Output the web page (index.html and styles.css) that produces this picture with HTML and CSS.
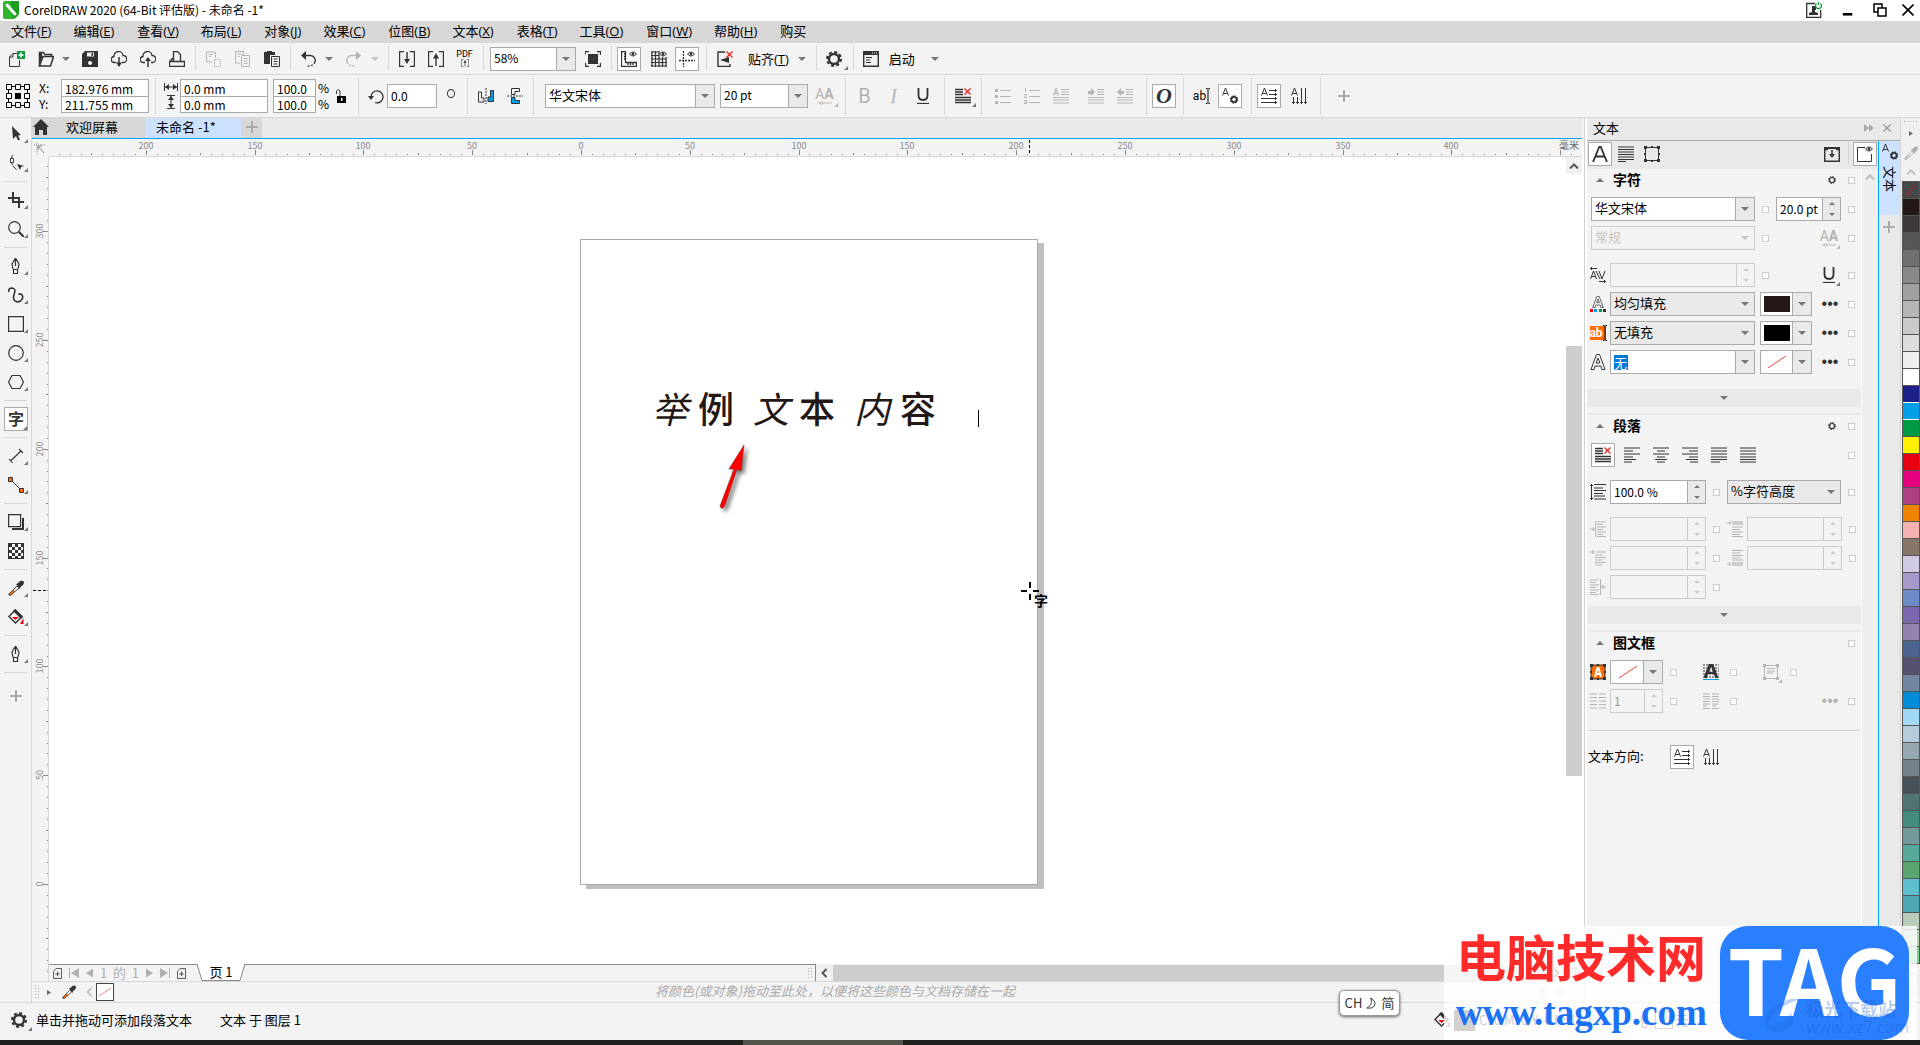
FILE: index.html
```html
<!DOCTYPE html>
<html lang="zh-CN">
<head>
<meta charset="utf-8">
<title>CorelDRAW 2020 (64-Bit 评估版) - 未命名 -1*</title>
<link rel="stylesheet" href="styles.css">
</head>
<body>
<svg class="sprite" aria-hidden="true">
  <symbol id="logo" viewBox="0 0 16 18"><path d="M0 2 Q0 0 2 0H16V12Q15 16 10 18H2Q0 18 0 16Z" fill="#2fb52c"/><path d="M8 0H16V12Q15 16 10 18Z" fill="#189d20"/><path d="M4 4L12 13" stroke="#fff" stroke-width="3" stroke-linecap="round"/></symbol>
  <symbol id="new" viewBox="0 0 16 16"><path d="M8 2.500H4L.5 6v9.500h10V9M4 2.500V6H.5" fill="none" stroke="#333"/><path d="M8 0h8v8H8z" fill="#109a3c"/><path d="M12 1.500v5M9.500 4h5" stroke="#fff" stroke-width="1.500"/></symbol>
  <symbol id="open" viewBox="0 0 16 16"><path d="M1.500 15V1.500h4l1 2h7V6" fill="none" stroke="#333" stroke-width="1.500"/><path d="M1.500 15L5 5.500h10.500L12.500 15z" fill="#f3f3f3" stroke="#333" stroke-width="1.500"/><path d="M1 14L1 2h3v5z" fill="#333"/></symbol>
  <symbol id="save" viewBox="0 0 16 16"><path d="M3 0h13v16H0V3z" fill="#333"/><path d="M5 1.500h7v4H5zM8 10a2 2 0 1 0 .1 0z" fill="#f3f3f3"/><path d="M9.500 2h1.500v3H9.500z" fill="#333"/></symbol>
  <symbol id="cloud" viewBox="0 0 16 16"><path d="M5 11.500H3.500A3 3 0 0 1 3 5.500A4.500 4.500 0 0 1 12 4.500A3.500 3.500 0 0 1 12.500 11.500H11" fill="none" stroke="#333" stroke-width="1.300"/></symbol>
  <symbol id="clouddown" viewBox="0 0 16 16"><use href="#cloud"/><path d="M8 6v8" stroke="#333" stroke-width="1.500"/><path d="M5 11.500h6L8 16z" fill="#333"/></symbol>
  <symbol id="cloudup" viewBox="0 0 16 16"><use href="#cloud"/><path d="M8 9v7" stroke="#333" stroke-width="1.500"/><path d="M5 10h6L8 6z" fill="#333"/></symbol>
  <symbol id="print" viewBox="0 0 16 16"><path d="M4.500 10.500v-10h4l3 3v7M.5 10.500h15v5H.5zM.5 10.500L4 7" fill="none" stroke="#333" stroke-width="1.300"/></symbol>
  <symbol id="cut" viewBox="0 0 16 16"><path d="M9.500 7V1H.5v10H6M3 3.500h4M3 5.500h2" fill="none" stroke="#b4b4b4"/><path d="M8.500 8.500h6v7h-6z" fill="none" stroke="#b4b4b4" stroke-dasharray="2 1"/></symbol>
  <symbol id="copy" viewBox="0 0 16 16"><path d="M5 12H.5V.5h8V4M2.500 3h4M2.500 5.500h2M6.500 4.500h8v11h-8zM8.500 7.500h4M8.500 10h4M8.500 12.500h4" fill="none" stroke="#b4b4b4"/></symbol>
  <symbol id="paste" viewBox="0 0 16 16"><path d="M0 1h3V0h5v1h3v3H6v9H0z" fill="#333"/><path d="M7.500 5.500h8v10h-8zM9.500 8h4M9.500 10.500h4M9.500 13h4" fill="#f3f3f3" stroke="#333"/></symbol>
  <symbol id="undo" viewBox="0 0 16 16"><path d="M3 4.500H9.500A5 5 0 0 1 14 11" fill="none" stroke="currentColor" stroke-width="1.300"/><path d="M14 11Q12 15.500 6 15" fill="none" stroke="currentColor" stroke-width="1.300" stroke-dasharray="2 1.500"/><path d="M5 0v9L0 4.500z" fill="currentColor"/></symbol>
  <symbol id="redo" viewBox="0 0 16 16"><path d="M13 4.500H6.500A5 5 0 0 0 2 11" fill="none" stroke="currentColor" stroke-width="1.300"/><path d="M2 11Q4 15.500 10 15" fill="none" stroke="currentColor" stroke-width="1.300" stroke-dasharray="2 1.500"/><path d="M11 0v9l5-4.500z" fill="currentColor"/></symbol>
  <symbol id="import" viewBox="0 0 16 16"><path d="M5 .5H.5v15H5M11 .5h4.500v15H11M8 1v10" fill="none" stroke="#333" stroke-width="1.400"/><path d="M5 8h6L8 13z" fill="#333"/></symbol>
  <symbol id="export" viewBox="0 0 16 16"><path d="M5 .5H.5v15H5M11 .5h4.500v15H11M8 15V5" fill="none" stroke="#333" stroke-width="1.400"/><path d="M5 7.500h6L8 2z" fill="#333"/></symbol>
  <symbol id="fit" viewBox="0 0 16 16"><path d="M3 3h10v10H3z" fill="#333"/><path d="M0 4V.5h4M12 .5h3.500V4M15.500 12v3.500H12M4 15.500H.5V12" fill="none" stroke="#333" stroke-width="1.400"/></symbol>
  <symbol id="eye" viewBox="0 0 8 6"><path d="M.5 3Q4-1 7.500 3Q4 7 .5 3z" fill="#fff" stroke="#333"/><circle cx="4" cy="3" r="1.400" fill="#333"/></symbol>
  <symbol id="rulers" viewBox="0 0 16 16"><path d="M.5.500h4v11h11v4H.5zM3 3h2M3 5.500h2M3 8h2M7 12v2M9.500 12v2M12 12v2" fill="none" stroke="#333" stroke-width="1.300"/><use href="#eye" x="8" y="0" width="8" height="6"/></symbol>
  <symbol id="grid" viewBox="0 0 16 16"><path d="M1 0v16M4.500 0v16M8 0v16M11.500 6v10M15 6v10M0 1h8M0 4.500h8M0 8h16M0 11.500h16M0 15h16" stroke="#333" stroke-width="1.200"/><use href="#eye" x="8" y="0" width="8" height="6"/></symbol>
  <symbol id="guides" viewBox="0 0 16 16"><path d="M4.500 0v16M0 9.500h16" stroke="#333" stroke-width="1.300" stroke-dasharray="2 1"/><use href="#eye" x="8" y="0" width="8" height="6"/></symbol>
  <symbol id="redx" viewBox="0 0 7 7"><path d="M.5.500l6 6M6.500.500l-6 6" stroke="#e8201c" stroke-width="1.300"/></symbol>
  <symbol id="snap" viewBox="0 0 16 16"><path d="M8 1H1v14.500h12V13" fill="none" stroke="#333" stroke-width="1.400"/><path d="M3 9l9-3v6z" fill="#333"/><use href="#redx" x="9" y="0" width="7" height="7"/></symbol>
  <symbol id="gear" viewBox="0 0 16 16"><circle cx="8" cy="8" r="5" fill="none" stroke="#333" stroke-width="2.400"/><circle cx="8" cy="8" r="7" fill="none" stroke="#333" stroke-width="2" stroke-dasharray="3 2.500"/></symbol>
  <symbol id="launch" viewBox="0 0 16 16"><path d="M.7.700h14.600v14.600H.7z" fill="none" stroke="#333" stroke-width="1.400"/><path d="M0 0h16v4H0z" fill="#333"/><path d="M3 6.500h6M3 9h4M3 11.500h5" stroke="#333"/><path d="M9 2h1M11 2h1M13 2h1" stroke="#fff"/></symbol>
  <symbol id="anchor" viewBox="0 0 24 24"><path d="M2.500 2.500h19v19h-19z" fill="none" stroke="#000"/><path d="M.5.500h5v5h-5zM9.500.500h5v5h-5zM18.500.500h5v5h-5zM.5 9.500h5v5h-5zM18.500 9.500h5v5h-5zM.5 18.500h5v5h-5zM9.500 18.500h5v5h-5zM18.500 18.500h5v5h-5z" fill="#fff" stroke="#000"/><path d="M9 9h6v6H9z"/></symbol>
  <symbol id="wide" viewBox="0 0 14 8"><path d="M.5 0v8M13.500 0v8M1 4h12" stroke="#333"/><path d="M1 4l4-3v6zM13 4L9 1v6z" fill="#333"/></symbol>
  <symbol id="tall" viewBox="0 0 8 14"><path d="M0 .5h8M0 13.500h8M4 1v12" stroke="#333"/><path d="M4 1l3 4H1zM4 13l3-4H1z" fill="#333"/></symbol>
  <symbol id="lock" viewBox="0 0 12 14"><path d="M1.500 5V2Q3-1 5 2v6" fill="none" stroke="#333"/><path d="M2 7h9v7H2z"/><path d="M6 9h1.500v3H6z" fill="#fff"/></symbol>
  <symbol id="rotate" viewBox="0 0 16 16"><path d="M3 9A6 6 0 1 1 7 14.500" fill="none" stroke="#333" stroke-width="1.300"/><path d="M0 8h6L3 12z" fill="#333"/></symbol>
  <symbol id="mirrorh" viewBox="0 0 16 16"><path d="M.5 4h3v6H6v4H.5z" fill="none" stroke="#333"/><path d="M15.500 2.500h-3V9H10v4.500h5.500z" fill="#00a0e9" stroke="#333"/><path d="M8 0v16" stroke="#333" stroke-dasharray="2 1"/></symbol>
  <symbol id="mirrorv" viewBox="0 0 16 16"><path d="M4.500 6.500V.5h8v3H8v3z" fill="none" stroke="#333"/><path d="M4.500 9.500v6h8v-3H8v-3z" fill="#00a0e9" stroke="#333"/><path d="M0 8h16" stroke="#333" stroke-dasharray="2 1"/></symbol>
  <symbol id="under" viewBox="0 0 16 16"><path d="M3.500 0v7Q3.500 12 8 12T12.500 7V0" fill="none" stroke="#333" stroke-width="1.800"/><path d="M2 15.500h12" stroke="#333" stroke-width="1.200"/></symbol>
  <symbol id="noalign" viewBox="0 0 16 16"><path d="M0 1.500h8M0 4h8M0 6.500h8M0 9.500h16M0 12h16M0 14.500h16" stroke="#333" stroke-width="1.300"/><use href="#redx" x="9" y="0" width="7" height="7"/></symbol>
  <symbol id="bullets" viewBox="0 0 16 16"><path d="M0 1h3v3H0zM0 7h3v3H0zM0 13h3v3H0z" fill="#b4b4b4"/><path d="M5 2.500h11M5 8.500h11M5 14.500h11" stroke="#b4b4b4"/></symbol>
  <symbol id="numbers" viewBox="0 0 16 16"><path d="M1.500 0v4M0 6.500h2.500L.5 9.500H3M0 12.500h2.500v3H0M.5 14h2M5 2.500h11M5 8.500h11M5 14.500h11" stroke="#b4b4b4" fill="none"/></symbol>
  <symbol id="dropcap" viewBox="0 0 16 16"><path d="M.5 7.500L3 1l2.500 6.500M1.500 5.500h3M8 1.500h8M8 4h8M8 6.500h8M0 9.500h16M0 12h16M0 15h16" fill="none" stroke="#b4b4b4" stroke-width="1.200"/></symbol>
  <symbol id="indent" viewBox="0 0 16 16"><path d="M0 3h3V0l4 4-4 4V6H0z" fill="#b4b4b4"/><path d="M9 1.500h7M9 4h7M9 6.500h7M0 9.500h16M0 12h16M0 15h16" stroke="#b4b4b4" stroke-width="1.200"/></symbol>
  <symbol id="outdent" viewBox="0 0 16 16"><path d="M7 3H4V0L0 4l4 4V6h3z" fill="#b4b4b4"/><path d="M9 1.500h7M9 4h7M9 6.500h7M0 9.500h16M0 12h16M0 15h16" stroke="#b4b4b4" stroke-width="1.200"/></symbol>
  <symbol id="textgear" viewBox="0 0 16 16"><path d="M.5 7.500L3.500 0l3 7.500M1.500 5.500h4" fill="none" stroke="#333"/><circle cx="12" cy="11.500" r="2.600" fill="none" stroke="#333" stroke-width="1.800"/><circle cx="12" cy="11.500" r="3.600" fill="none" stroke="#333" stroke-width="1.200" stroke-dasharray="1.500 1.300"/></symbol>
  <symbol id="ibeam" viewBox="0 0 4 16"><path d="M0 .5h1.500M2.500.500H4M2 1v14M0 15.500h1.500M2.500 15.500H4" stroke="#000"/></symbol>
  <symbol id="horiz" viewBox="0 0 16 16"><path d="M.5 7.500L3.500 0l3 7.500M1.500 5.500h4M8 2.500h8M8 6.500h8M0 10.500h16M0 14.500h16M14.500 1v3M14.500 5v3M14.500 9v3M14.500 13v3" fill="none" stroke="#333"/></symbol>
  <symbol id="vert" viewBox="0 0 16 16"><path d="M.5 7.500L3.500 0l3 7.500M1.500 5.500h4M10.500 0v16M14.500 0v16M2.500 9v7M6.500 9v7M1 14.500h3M5 14.500h3M9 14.500h3M13 14.500h3" fill="none" stroke="#333"/></symbol>
  <symbol id="opentype" viewBox="0 0 16 4"><path d="M0 2h16" stroke="#b4b4b4"/><circle cx="4" cy="2" r="1.500" fill="#f3f3f3" stroke="#b4b4b4"/></symbol>
  <symbol id="plus" viewBox="0 0 12 12"><path d="M6 0v12M0 6h12" stroke="#aaa" stroke-width="2"/></symbol>
  <symbol id="account" viewBox="0 0 16 16"><path d="M9 1.500H.7v13.800h14V8" fill="none" stroke="#333" stroke-width="1.300"/><path d="M6 4h4v4H9v2l3 1v2H3v-2l3-1V8z" fill="#333"/><path d="M10.500 1.500a3 3 0 1 0 4 0M12.500 0v3" fill="none" stroke="#109a3c" stroke-width="1.300"/></symbol>
  <symbol id="min" viewBox="0 0 12 14"><path d="M0 12h11" stroke="#000" stroke-width="3"/></symbol>
  <symbol id="restore" viewBox="0 0 14 14"><path d="M1 1h8v8H1z" fill="none" stroke="#000" stroke-width="1.500"/><path d="M5 5h8v8H5z" fill="#fff" stroke="#000" stroke-width="1.500"/></symbol>
  <symbol id="close" viewBox="0 0 12 12"><path d="M.5.500l11 11M11.500.500l-11 11" stroke="#000" stroke-width="1.600"/></symbol>
  <symbol id="pick" viewBox="0 0 16 16"><path d="M4 0l9 9-3 .5 2 4-2 1-2-4.500L5 13z" fill="#333"/></symbol>
  <symbol id="shape" viewBox="0 0 16 16"><path d="M5 0Q2 3 3.500 7.500T9 15" fill="none" stroke="#333" stroke-dasharray="5 1"/><path d="M2.500 3.500h3v4h-3z" fill="#fff" stroke="#333"/><path d="M9 9l7 2-3 1-1 3z" fill="#333"/></symbol>
  <symbol id="crop" viewBox="0 0 16 16"><path d="M5 0v10h11M0 6h11v10" fill="none" stroke="#333" stroke-width="2"/></symbol>
  <symbol id="zoom" viewBox="0 0 16 16"><circle cx="6.500" cy="6.500" r="5.800" fill="none" stroke="#333" stroke-width="1.200"/><path d="M11 11l5 5" stroke="#333" stroke-width="2.200"/></symbol>
  <symbol id="pen" viewBox="0 0 16 16"><path d="M5.500 11.500h4v4h-4zM5 11L4 6l3.500-6L11 6l-1 5M7.500 1v7" fill="none" stroke="#333" stroke-width="1.200"/></symbol>
  <symbol id="curve" viewBox="0 0 16 16"><path d="M1 5Q0 1 4 1Q8 1.500 6.500 6Q4.500 11 6.500 13.500Q9 16 12.500 14Q16 11 14 8Q12.500 6 10.500 7.500" fill="none" stroke="#333" stroke-width="1.600"/></symbol>
  <symbol id="rect" viewBox="0 0 16 16"><path d="M.6.600h14.800v14.800H.6z" fill="none" stroke="#333" stroke-width="1.200"/></symbol>
  <symbol id="ellipse" viewBox="0 0 16 16"><circle cx="8" cy="8" r="7.300" fill="none" stroke="#333" stroke-width="1.200"/></symbol>
  <symbol id="poly" viewBox="0 0 16 16"><path d="M4 1.500h8l3.500 6.500-3.500 6.500H4L.5 8z" fill="none" stroke="#333" stroke-width="1.200"/></symbol>
  <symbol id="dim" viewBox="0 0 16 16"><path d="M2.500 13L13 3M1 11l3.500 4M11 1l4 4" fill="none" stroke="#333" stroke-width="1.100"/></symbol>
  <symbol id="conn" viewBox="0 0 16 16"><path d="M3 3l10 10" stroke="#333"/><path d="M.5.500h4v4h-4zM11.500 11.500h4v4h-4z" fill="#ff6d00" stroke="#333"/></symbol>
  <symbol id="shadow" viewBox="0 0 16 16"><path d="M.6.600h12v12H.6z" fill="none" stroke="#333" stroke-width="1.200"/><path d="M4 15h11V4" fill="none" stroke="#333" stroke-width="2"/></symbol>
  <symbol id="checker" viewBox="0 0 16 16"><path d="M0 0h16v16H0z" fill="#333"/><path d="M4 1h3v3H4zM10 1h3v3h-3zM1 4h3v3H1zM7 4h3v3H7zM13 4h2v3h-2zM4 7h3v3H4zM10 7h3v3h-3zM1 10h3v3H1zM7 10h3v3H7zM13 10h2v3h-2zM4 13h3v2H4zM10 13h3v2h-3z" fill="#fff"/></symbol>
  <symbol id="dropper" viewBox="0 0 16 16"><path d="M1 14L9 6l2 2-8 7H1z" fill="#fff" stroke="#333"/><path d="M1 14l4-4 1.500 1.500L3 15H1z" fill="#ff6d00" stroke="#333" stroke-width=".6"/><path d="M8 4l1.500-.5L12 1q3-1 4 1 0 2-1 3l-2.500 2L12 9z" fill="#333"/></symbol>
  <symbol id="bucket" viewBox="0 0 16 16"><path d="M7.500 1L14 7.500 7.500 14 1 7.500z" fill="#fff" stroke="#333" stroke-width="1.500"/><path d="M7 0l8 8-2 2-8-8z" fill="#333"/><path d="M4 8h7l-3.500 3zM15.500 9v6H12z" fill="#e60012"/></symbol>
  <symbol id="home" viewBox="0 0 16 16"><path d="M8 0l8 8h-2v8h-4v-5H6v5H2V8H0z" fill="#333"/></symbol>
  <symbol id="up" viewBox="0 0 10 6"><path d="M1 5.500l4-4 4 4" fill="none" stroke="currentColor" stroke-width="2"/></symbol>
  <symbol id="left" viewBox="0 0 6 10"><path d="M5.500 1l-4 4 4 4" fill="none" stroke="currentColor" stroke-width="2"/></symbol>
  <symbol id="right" viewBox="0 0 6 10"><path d="M.5 1l4 4-4 4" fill="none" stroke="currentColor" stroke-width="2"/></symbol>
  <symbol id="more" viewBox="0 0 9 8"><path d="M.5.500L4 4 .5 7.500M4.500.500L8 4 4.500 7.500" fill="none" stroke="currentColor"/></symbol>
  <symbol id="dbl" viewBox="0 0 10 8"><path d="M0 0l5 4-5 4zM5 0l5 4-5 4z" fill="#aaa"/></symbol>
  <symbol id="addpage" viewBox="0 0 10 12"><path d="M3.500.500h6v11h-9v-8zM5 4v5M2.500 6.500h5" fill="none" stroke="#444"/></symbol>
  <symbol id="tri" viewBox="0 0 8 10"><path d="M0 0l8 5-8 5z" fill="currentColor"/></symbol>
  <symbol id="tril" viewBox="0 0 8 10"><path d="M8 0L0 5l8 5z" fill="currentColor"/></symbol>
  <symbol id="first" viewBox="0 0 10 10"><path d="M.5 0v10" stroke="#b0b0b0"/><path d="M10 0L2 5l8 5z" fill="#b0b0b0"/></symbol>
  <symbol id="last" viewBox="0 0 10 10"><path d="M9.500 0v10" stroke="#b0b0b0"/><path d="M0 0l8 5-8 5z" fill="#b0b0b0"/></symbol>
  <symbol id="bigA" viewBox="0 0 16 16"><path d="M1 16L7.200 1h1.600L15 16M3.500 10.500h9" fill="none" stroke="#333" stroke-width="1.800"/></symbol>
  <symbol id="para" viewBox="0 0 16 16"><path d="M0 1h16M0 3.500h16M0 6h16M0 8.500h16M0 11h16M0 13.500h16M0 15.500h8" stroke="#333"/></symbol>
  <symbol id="frame" viewBox="0 0 16 16"><path d="M1.500 1.500h13v13h-13z" fill="none" stroke="#333"/><path d="M0 0h3v3H0zM13 0h3v3h-3zM0 13h3v3H0zM13 13h3v3h-3zM7 0h2v2H7zM7 14h2v2H7zM0 7h2v2H0zM14 7h2v2h-2z" fill="#333"/></symbol>
  <symbol id="dock" viewBox="0 0 16 16"><path d="M4 3.500H.7v11.800h14.600V3.500H12M8 4v6" fill="none" stroke="#333" stroke-width="1.500"/><path d="M0 1h16v2H0zM5 8h6l-3 4z" fill="#333"/></symbol>
  <symbol id="boxeye" viewBox="0 0 16 16"><path d="M8 1.500H.5v14h14V8" fill="none" stroke="#333"/><use href="#eye" x="8" y="0" width="8" height="6"/></symbol>
  <symbol id="kern" viewBox="0 0 16 16"><path d="M.5 12L3.500 4l3 8M1.500 9.500h4M6 4l4 8M9 4l3 8 3-8M0 1.500h7M9 14.500h7M1.500 0v3M14.500 13v3" fill="none" stroke="#333"/></symbol>
  <symbol id="outA" viewBox="0 0 16 16"><path d="M1 15.500L6.500.500h3L15 15.500h-3L11 12H5l-1 3.500zM6 9h4L8 4z" fill="#fff" stroke="#333"/></symbol>
  <symbol id="fillA" viewBox="0 0 16 16"><use href="#outA" x="2" y="0" width="12" height="12"/><path d="M0 13h3v3H0z" fill="#f00"/><path d="M4 13h3v3H4z" fill="#00a0e9"/><path d="M9 13h3v3H9z" fill="#094"/><path d="M13 13h3v3h-3z" fill="#333"/></symbol>
  <symbol id="frameA" viewBox="0 0 16 16"><path d="M1 1h14v14H1z" fill="#ff6d00" stroke="#333"/><path d="M0 0h3v3H0zM13 0h3v3h-3zM0 13h3v3H0zM13 13h3v3h-3zM7 0h2v2H7zM7 14h2v2H7zM0 7h2v2H0zM14 7h2v2h-2z" fill="#333"/><path d="M5 13L7.500 4h1L11 13M6 10h4" fill="none" stroke="#fff" stroke-width="2"/></symbol>
  <symbol id="slash" viewBox="0 0 18 12"><path d="M0 12L18 0" stroke="#f04040"/></symbol>
  <symbol id="al" viewBox="0 0 16 16"><path d="M0 1h16M0 4h9M0 7h16M0 10h9M0 12.500h12M0 15h8" stroke="#333" stroke-width="1.200"/></symbol>
  <symbol id="ac" viewBox="0 0 16 16"><path d="M0 1h16M4 4h8M0 7h16M4 10h8M2 12.500h12M4 15h8" stroke="#333" stroke-width="1.200"/></symbol>
  <symbol id="ar" viewBox="0 0 16 16"><path d="M0 1h16M7 4h9M0 7h16M7 10h9M4 12.500h12M8 15h8" stroke="#333" stroke-width="1.200"/></symbol>
  <symbol id="aj" viewBox="0 0 16 16"><path d="M0 1h16M0 4h16M0 7h16M0 10h16M0 12.500h16M0 15h9" stroke="#333" stroke-width="1.200"/></symbol>
  <symbol id="af" viewBox="0 0 16 16"><path d="M0 1h16M0 4h16M0 7h16M0 10h16M0 12.500h16M0 15h16" stroke="#333" stroke-width="1.200"/></symbol>
  <symbol id="leading" viewBox="0 0 16 16"><path d="M1.500 0v16M0 1.500h3M0 14.500h3M4 .5h12M4 4h9M4 6.500h12M4 9.500h9M4 12h11M4 15h12" stroke="#333"/></symbol>
  <symbol id="indl" viewBox="0 0 16 16"><path d="M0 8h5M3 6v4M5.500 0v16M7 1h9M7 3.500h6M7 6h9M7 8.500h6M7 11h9M7 13.500h6M7 15.500h9" stroke="#b4b4b4"/></symbol>
  <symbol id="indf" viewBox="0 0 16 16"><path d="M0 2h5M3 0v4M6 2h10M5 5h8M5 7.500h11M5 10h8M5 12.500h11M5 15h7" stroke="#b4b4b4"/></symbol>
  <symbol id="indr" viewBox="0 0 16 16"><path d="M11 8h5M13 6v4M10.500 0v16M0 1h9M0 3.500h6M0 6h9M0 8.500h6M0 11h9M0 13.500h6M0 15.500h9" stroke="#b4b4b4"/></symbol>
  <symbol id="bef" viewBox="0 0 16 16"><path d="M0 2h4M3 0v4" stroke="#b4b4b4"/><path d="M5 0h11v4H5z" fill="#ccc"/><path d="M5 6h11M5 8.500h8M5 11h11M5 13.500h8M5 15.500h11" stroke="#b4b4b4"/></symbol>
  <symbol id="aft" viewBox="0 0 16 16"><path d="M0 14h4M3 12v4" stroke="#b4b4b4"/><path d="M5 12h11v4H5z" fill="#ccc"/><path d="M5 .5h11M5 3h8M5 5.500h11M5 8h8M5 10h11" stroke="#b4b4b4"/></symbol>
  <symbol id="baseA" viewBox="0 0 16 16"><path d="M0 1h16M0 4h16M0 7h16M0 10h16M0 13h16" stroke="#333" stroke-dasharray="2 1"/><path d="M2 14L7 1h2l5 13" fill="none" stroke="#333" stroke-width="3"/><path d="M4 9h8" stroke="#333" stroke-width="2"/><path d="M0 15.500h16" stroke="#00a0e9"/></symbol>
  <symbol id="framealign" viewBox="0 0 16 16"><path d="M1.500 1.500h13v13h-13zM4 4.500h8M4 7h8M4 9h6" fill="none" stroke="#b4b4b4"/><path d="M0 0h3v3H0zM13 0h3v3h-3zM0 13h3v3H0zM13 13h3v3h-3z" fill="#b4b4b4"/></symbol>
  <symbol id="cols" viewBox="0 0 16 16"><path d="M0 1h7M9 1h7M0 4.500h7M9 4.500h7M0 8h7M9 8h7M0 11.500h7M9 11.500h7M0 15h7M9 15h7" stroke="#b4b4b4"/></symbol>
  <symbol id="cols2" viewBox="0 0 16 16"><path d="M0 1h7M9 1h7M0 3.500h7M9 3.500h7M0 6h7M9 6h7M0 8.500h7M9 8.500h7M0 11h7M9 11h7M0 13h4M9 13h4M0 15.500h7M9 15.500h7" stroke="#b4b4b4"/></symbol>
  <symbol id="origin" viewBox="0 0 12 12"><path d="M0 2h12M3 0v12" stroke="#888" stroke-dasharray="1 1"/><path d="M4 3l6 7M4 3v4M4 3h4" stroke="#888" fill="none"/></symbol>
  <symbol id="navi" viewBox="0 0 12 12"><circle cx="6" cy="6" r="5" fill="none" stroke="#555"/><path d="M4 4h1M7 4h1M4 7h1M7 7h1M6 9v3" stroke="#555"/></symbol>
</svg>

<div class="app">
  <header class="titlebar">
    <svg class="logo"><use href="#logo"/></svg>
    <h1>CorelDRAW 2020 (64-Bit 评估版) - 未命名 -1*</h1>
    <button aria-label="帐户"><svg class="i"><use href="#account"/></svg></button>
    <button aria-label="最小化"><svg class="s12"><use href="#min"/></svg></button>
    <button aria-label="还原"><svg class="s14"><use href="#restore"/></svg></button>
    <button aria-label="关闭"><svg class="s12"><use href="#close"/></svg></button>
  </header>

  <nav class="menubar">
    <button>文件(<u>F</u>)</button><button>编辑(<u>E</u>)</button><button>查看(<u>V</u>)</button><button>布局(<u>L</u>)</button><button>对象(<u>J</u>)</button><button>效果(<u>C</u>)</button><button>位图(<u>B</u>)</button><button>文本(<u>X</u>)</button><button>表格(<u>T</u>)</button><button>工具(<u>O</u>)</button><button>窗口(<u>W</u>)</button><button>帮助(<u>H</u>)</button><button>购买</button>
  </nav>

  <div class="toolbar">
    <button class="t" aria-label="新建"><svg class="i"><use href="#new"/></svg></button>
    <button class="t" aria-label="打开"><svg class="i"><use href="#open"/></svg></button>
    <button class="drop" aria-label="最近打开"></button>
    <button class="t" aria-label="保存"><svg class="i"><use href="#save"/></svg></button>
    <button class="t" aria-label="云下载"><svg class="i"><use href="#clouddown"/></svg></button>
    <button class="t" aria-label="云上传"><svg class="i"><use href="#cloudup"/></svg></button>
    <button class="t" aria-label="打印"><svg class="i"><use href="#print"/></svg></button>
    <i class="sep"></i>
    <button class="t" aria-label="剪切" disabled><svg class="i"><use href="#cut"/></svg></button>
    <button class="t" aria-label="复制" disabled><svg class="i"><use href="#copy"/></svg></button>
    <button class="t" aria-label="粘贴"><svg class="i"><use href="#paste"/></svg></button>
    <i class="sep"></i>
    <button class="t ink" aria-label="撤消"><svg class="i"><use href="#undo"/></svg></button>
    <button class="drop" aria-label="撤消列表"></button>
    <button class="t off" aria-label="重做" disabled><svg class="i"><use href="#redo"/></svg></button>
    <button class="drop off" aria-label="重做列表" disabled></button>
    <i class="sep"></i>
    <button class="t" aria-label="导入"><svg class="i"><use href="#import"/></svg></button>
    <button class="t" aria-label="导出"><svg class="i"><use href="#export"/></svg></button>
    <button class="t pdf" aria-label="发布为 PDF">PDF<svg class="s8"><use href="#export"/></svg></button>
    <i class="sep"></i>
    <span class="combo zoom"><select aria-label="缩放级别"><option>58%</option></select></span>
    <button class="t" aria-label="全屏预览"><svg class="i"><use href="#fit"/></svg></button>
    <i class="sep"></i>
    <button class="t on" aria-label="显示标尺"><svg class="i"><use href="#rulers"/></svg></button>
    <button class="t" aria-label="显示网格"><svg class="i"><use href="#grid"/></svg></button>
    <button class="t on" aria-label="显示辅助线"><svg class="i"><use href="#guides"/></svg></button>
    <i class="sep"></i>
    <button class="t" aria-label="关闭贴齐"><svg class="i"><use href="#snap"/></svg></button>
    <button class="label">贴齐(<u>T</u>)</button>
    <button class="drop" aria-label="贴齐选项"></button>
    <i class="sep"></i>
    <button class="t fly" aria-label="选项"><svg class="i"><use href="#gear"/></svg></button>
    <i class="sep"></i>
    <button class="t" aria-label="应用程序启动器"><svg class="i"><use href="#launch"/></svg></button>
    <button class="label start">启动</button>
    <button class="drop" aria-label="启动列表"></button>
  </div>

  <div class="toolbar props">
    <button class="anchor" aria-label="对象原点"><svg class="s24"><use href="#anchor"/></svg></button>
    <div class="pair names"><label for="px">X:</label><label for="py">Y:</label></div>
    <div class="pair boxes w88"><input id="px" value="182.976 mm"><input id="py" value="211.755 mm"></div>
    <i class="sep"></i>
    <div class="pair marks"><svg class="wide"><use href="#wide"/></svg><svg class="tall"><use href="#tall"/></svg></div>
    <div class="pair boxes w88"><input aria-label="宽度" value="0.0 mm"><input aria-label="高度" value="0.0 mm"></div>
    <div class="pair boxes w43"><input aria-label="水平缩放" value="100.0"><input aria-label="垂直缩放" value="100.0"></div>
    <div class="pair names pct"><span>%</span><span>%</span></div>
    <button class="t ratio" aria-label="锁定比率"><svg class="lock"><use href="#lock"/></svg></button>
    <i class="sep"></i>
    <svg class="i rot"><use href="#rotate"/></svg>
    <input class="box w50" aria-label="旋转角度" value="0.0">
    <span class="deg"></span>
    <i class="sep"></i>
    <button class="t" aria-label="水平镜像"><svg class="i"><use href="#mirrorh"/></svg></button>
    <button class="t" aria-label="垂直镜像"><svg class="i"><use href="#mirrorv"/></svg></button>
    <i class="sep"></i>
    <span class="combo font"><select aria-label="字体"><option>华文宋体</option></select></span>
    <span class="combo size"><select aria-label="字号"><option>20 pt</option></select></span>
    <button class="t aa fly" aria-label="可变字体" disabled><span>A<b>A</b></span><svg class="bar"><use href="#opentype"/></svg></button>
    <i class="sep"></i>
    <button class="t off bold" aria-label="粗体" disabled>B</button>
    <button class="t off ital" aria-label="斜体" disabled>I</button>
    <button class="t" aria-label="下划线"><svg class="i"><use href="#under"/></svg></button>
    <i class="sep"></i>
    <button class="t fly" aria-label="文本对齐"><svg class="i"><use href="#noalign"/></svg></button>
    <i class="sep"></i>
    <button class="t" aria-label="项目符号" disabled><svg class="i"><use href="#bullets"/></svg></button>
    <button class="t" aria-label="编号" disabled><svg class="i"><use href="#numbers"/></svg></button>
    <button class="t" aria-label="首字下沉" disabled><svg class="i"><use href="#dropcap"/></svg></button>
    <button class="t gap" aria-label="增加缩进" disabled><svg class="i"><use href="#indent"/></svg></button>
    <button class="t" aria-label="减少缩进" disabled><svg class="i"><use href="#outdent"/></svg></button>
    <i class="sep"></i>
    <button class="t on oval" aria-label="交互式 OpenType">O</button>
    <i class="sep"></i>
    <button class="t edit" aria-label="编辑文本">ab<svg class="beam"><use href="#ibeam"/></svg></button>
    <button class="t on" aria-label="文本属性"><svg class="i"><use href="#textgear"/></svg></button>
    <i class="sep after"></i>
    <button class="t on" aria-label="水平方向"><svg class="i"><use href="#horiz"/></svg></button>
    <button class="t" aria-label="垂直方向"><svg class="i"><use href="#vert"/></svg></button>
    <i class="sep last"></i>
    <button class="t" aria-label="自定义"><svg class="s12"><use href="#plus"/></svg></button>
  </div>

  <main class="main">
    <div class="toolbox">
      <button class="t fly" aria-label="选择"><svg class="i"><use href="#pick"/></svg></button>
      <button class="t fly" aria-label="形状"><svg class="i"><use href="#shape"/></svg></button>
      <i class="rule"></i>
      <button class="t fly" aria-label="裁剪"><svg class="i"><use href="#crop"/></svg></button>
      <button class="t fly" aria-label="缩放"><svg class="i"><use href="#zoom"/></svg></button>
      <i class="rule"></i>
      <button class="t fly" aria-label="手绘"><svg class="i"><use href="#pen"/></svg></button>
      <button class="t fly" aria-label="艺术笔"><svg class="i"><use href="#curve"/></svg></button>
      <button class="t fly" aria-label="矩形"><svg class="i"><use href="#rect"/></svg></button>
      <button class="t fly" aria-label="椭圆形"><svg class="i"><use href="#ellipse"/></svg></button>
      <button class="t fly" aria-label="多边形"><svg class="i"><use href="#poly"/></svg></button>
      <i class="rule"></i>
      <button class="t on fly zi">字</button>
      <i class="rule"></i>
      <button class="t fly" aria-label="尺度"><svg class="i"><use href="#dim"/></svg></button>
      <button class="t fly" aria-label="连接器"><svg class="i"><use href="#conn"/></svg></button>
      <i class="rule"></i>
      <button class="t fly" aria-label="阴影"><svg class="i"><use href="#shadow"/></svg></button>
      <button class="t" aria-label="透明度"><svg class="i"><use href="#checker"/></svg></button>
      <i class="rule"></i>
      <button class="t fly" aria-label="颜色滴管"><svg class="i"><use href="#dropper"/></svg></button>
      <button class="t fly" aria-label="交互式填充"><svg class="i"><use href="#bucket"/></svg></button>
      <i class="rule"></i>
      <button class="t fly" aria-label="轮廓笔"><svg class="i"><use href="#pen"/></svg></button>
      <i class="rule"></i>
      <button class="t extra" aria-label="快速自定义"><svg class="s12"><use href="#plus"/></svg></button>
    </div>

    <section class="work">
      <div class="tabs">
        <button class="tab home" aria-label="主页"><svg class="i"><use href="#home"/></svg></button>
        <button class="tab welcome">欢迎屏幕</button>
        <button class="tab current">未命名 -1*</button>
        <button class="tab newtab" aria-label="新建文档"><svg class="s12"><use href="#plus"/></svg></button>
      </div>
      <div class="desk">
        <div class="corner"><svg class="s12"><use href="#origin"/></svg></div>
        <svg class="hruler" id="hruler"></svg>
        <svg class="vruler" id="vruler"></svg>
        <div class="canvas">
          <div class="sheet"></div>
          <p class="artistic"><span class="word"><em>举</em><strong>例</strong></span><span class="word"><em>文</em><strong>本</strong></span><span class="word"><em>内</em><strong>容</strong></span></p>
          <div class="caret"></div>
          <svg class="arrow" viewBox="0 0 40 76"><path d="M4 67Q2 68 1 65L15 28l-5 0L25 4l-3 26-4-2L6 64z" fill="#f00" stroke="#902020" stroke-width=".6"/></svg>
          <svg class="cross" viewBox="0 0 18 18"><path d="M9 0v6M9 12v6M0 9h6M12 9h6" stroke="#000" stroke-width="2"/></svg>
          <span class="crosszi">字</span>
        </div>
        <div class="vscroll">
          <button aria-label="向上滚动"><svg class="chev"><use href="#up"/></svg></button>
          <div class="vtrack"><div class="thumb"></div></div>
          <button class="plain" aria-label="向下滚动"><svg class="chev flip"><use href="#up"/></svg></button>
        </div>
        <div class="pagebar">
          <div class="pages">
            <button aria-label="在前面添加页"><svg class="addpage"><use href="#addpage"/></svg></button>
            <button aria-label="第一页" disabled><svg class="nav"><use href="#first"/></svg></button>
            <button aria-label="上一页" disabled><svg class="tri"><use href="#tril"/></svg></button>
            <span class="count"><span>1</span><span>的</span><span>1</span></span>
            <button aria-label="下一页" disabled><svg class="tri"><use href="#tri"/></svg></button>
            <button aria-label="最后一页" disabled><svg class="nav"><use href="#last"/></svg></button>
            <button aria-label="在后面添加页"><svg class="addpage"><use href="#addpage"/></svg></button>
            <button class="pagetab"><svg viewBox="0 0 48 17"><path d="M0 0L5 16.500H43L48 0" fill="#fff" stroke="#888"/></svg><span>页 1</span></button>
            <i class="grip"></i>
          </div>
          <div class="hscroll">
            <button aria-label="向左滚动"><svg class="chevs"><use href="#left"/></svg></button>
            <div class="thumb"></div>
            <button class="plain" aria-label="向右滚动"><svg class="chevs"><use href="#right"/></svg></button>
            <button class="plain" aria-label="导航器"><svg class="s12"><use href="#navi"/></svg></button>
          </div>
        </div>
      </div>
      <div class="docpalette">
        <i class="grip"></i>
        <button aria-label="调色板菜单"><svg class="tiny dark"><use href="#tri"/></svg></button>
        <button class="eyedrop" aria-label="颜色滴管"><svg class="s14"><use href="#dropper"/></svg></button>
        <button class="faint" aria-label="向左"><svg class="chevs"><use href="#left"/></svg></button>
        <button class="nocolor" aria-label="无色"><svg class="slash"><use href="#slash"/></svg></button>
        <p>将颜色(或对象)拖动至此处，以便将这些颜色与文档存储在一起</p>
        <button class="faint" aria-label="向右"><svg class="chevs"><use href="#right"/></svg></button>
        <button class="faint" aria-label="展开"><svg class="more"><use href="#more"/></svg></button>
      </div>
    </section>

    <aside class="docker">
      <div class="dockhead"><h2>文本</h2><button aria-label="折叠"><svg class="dbl"><use href="#dbl"/></svg></button><button aria-label="关闭泊坞窗" class="x"><svg class="s8"><use href="#close"/></svg></button></div>
      <div class="dockbody">
        <div class="dockmain">
          <div class="docktools">
            <button class="sq on" aria-label="字符"><svg class="i"><use href="#bigA"/></svg></button>
            <button class="sq" aria-label="段落"><svg class="i"><use href="#para"/></svg></button>
            <button class="sq" aria-label="图文框"><svg class="i"><use href="#frame"/></svg></button>
            <button class="sq push" aria-label="导出样式"><svg class="i"><use href="#dock"/></svg></button>
            <i class="sep"></i>
            <button class="sq on" aria-label="显示"><svg class="i"><use href="#boxeye"/></svg></button>
          </div>
          <div class="dockscroll">
          <div class="scrollarea">
            <div class="panel">
              <div class="shead"><button class="fold" aria-label="折叠字符"></button><h3>字符</h3><svg class="cog"><use href="#gear"/></svg><i class="cb"></i></div>
              <div class="row"><span class="combo w164"><select aria-label="字体"><option>华文宋体</option></select></span><i class="cb"></i><span class="spin w65"><input aria-label="字号" value="20.0 pt"><span class="steps"></span></span><i class="cb"></i></div>
              <div class="row"><span class="combo w164 off flat"><select aria-label="字体样式" disabled><option>常规</option></select></span><i class="cb"></i><button class="sq aa fly push" aria-label="可变字体" disabled><span>A<b>A</b></span><svg class="bar"><use href="#opentype"/></svg></button><i class="cb"></i></div>
              <div class="row space"><span class="field"><svg class="i"><use href="#kern"/></svg><span class="spin w145 off"><input aria-label="字距调整" disabled><span class="steps"></span></span></span><i class="cb"></i><button class="sq fly push" aria-label="下划线"><svg class="i"><use href="#under"/></svg></button><i class="cb"></i></div>
              <div class="row"><span class="field"><svg class="i"><use href="#fillA"/></svg><span class="combo w145 flat"><select aria-label="填充类型"><option>均匀填充</option></select></span><button class="combo color second" aria-label="文本颜色"><i class="chip brown"></i></button></span><button class="sq dots push" aria-label="填充设置">•••</button><i class="cb"></i></div>
              <div class="row"><span class="field"><span class="abfill">ab<svg class="beam"><use href="#ibeam"/></svg></span><span class="combo w145 flat"><select aria-label="背景填充类型"><option>无填充</option></select></span><button class="combo color second" aria-label="背景颜色"><i class="chip"></i></button></span><button class="sq dots push" aria-label="背景设置">•••</button><i class="cb"></i></div>
              <div class="row"><span class="field"><svg class="i"><use href="#outA"/></svg><span class="combo w145 editable"><input aria-label="轮廓宽度" value="无"></span><button class="combo color second" aria-label="轮廓颜色"><svg class="slash"><use href="#slash"/></svg></button></span><button class="sq dots push" aria-label="轮廓设置">•••</button><i class="cb"></i></div>
              <button class="expand first" aria-label="更多字符选项"></button>
            </div>
            <div class="panel line">
              <div class="shead"><button class="fold" aria-label="折叠段落"></button><h3>段落</h3><svg class="cog"><use href="#gear"/></svg><i class="cb"></i></div>
              <div class="row aligns"><button class="sq on" aria-label="无对齐"><svg class="i"><use href="#noalign"/></svg></button><button class="sq" aria-label="左对齐"><svg class="i"><use href="#al"/></svg></button><button class="sq" aria-label="居中"><svg class="i"><use href="#ac"/></svg></button><button class="sq" aria-label="右对齐"><svg class="i"><use href="#ar"/></svg></button><button class="sq" aria-label="两端对齐"><svg class="i"><use href="#aj"/></svg></button><button class="sq" aria-label="强制对齐"><svg class="i"><use href="#af"/></svg></button><i class="cb push"></i></div>
              <div class="row space"><span class="field"><svg class="i"><use href="#leading"/></svg><span class="spin w96"><input aria-label="行间距" value="100.0 %"><span class="steps"></span></span></span><i class="cb"></i><span class="combo w114 flat"><select aria-label="行距单位"><option>%字符高度</option></select></span><i class="cb"></i></div>
              <div class="row space"><span class="field"><svg class="i"><use href="#indl"/></svg><span class="spin w96 off"><input aria-label="左行缩进" disabled><span class="steps"></span></span></span><i class="cb"></i><span class="field push"><svg class="i"><use href="#bef"/></svg><span class="spin w95 off"><input aria-label="段前间距" disabled><span class="steps"></span></span></span><i class="cb"></i></div>
              <div class="row"><span class="field"><svg class="i"><use href="#indf"/></svg><span class="spin w96 off"><input aria-label="首行缩进" disabled><span class="steps"></span></span></span><i class="cb"></i><span class="field push"><svg class="i"><use href="#aft"/></svg><span class="spin w95 off"><input aria-label="段后间距" disabled><span class="steps"></span></span></span><i class="cb"></i></div>
              <div class="row"><span class="field"><svg class="i"><use href="#indr"/></svg><span class="spin w96 off"><input aria-label="右行缩进" disabled><span class="steps"></span></span></span><i class="cb"></i></div>
              <button class="expand" aria-label="更多段落选项"></button>
            </div>
            <div class="panel line">
              <div class="shead"><button class="fold" aria-label="折叠图文框"></button><h3>图文框</h3><i class="cb push"></i></div>
              <div class="row"><span class="field"><svg class="i"><use href="#frameA"/></svg><button class="combo color w53" aria-label="图文框颜色"><svg class="slash"><use href="#slash"/></svg></button></span><i class="cb"></i><span class="sq wide1"><svg class="i"><use href="#baseA"/></svg></span><i class="cb"></i><span class="sq wide1 fly off"><svg class="i"><use href="#framealign"/></svg></span><i class="cb"></i></div>
              <div class="row"><span class="field"><svg class="i"><use href="#cols"/></svg><span class="spin w53 off"><input aria-label="栏数" value="1" disabled><span class="steps"></span></span></span><i class="cb"></i><span class="sq wide1"><svg class="i"><use href="#cols2"/></svg></span><i class="cb"></i><button class="sq dots push off" aria-label="栏设置" disabled>•••</button><i class="cb"></i></div>
              <hr>
              <div class="row dir"><span>文本方向:</span><button class="sq on" aria-label="水平"><svg class="i"><use href="#horiz"/></svg></button><button class="sq" aria-label="垂直"><svg class="i"><use href="#vert"/></svg></button></div>
            </div>
          </div>
          <div class="dockbar"><svg class="chev"><use href="#up"/></svg></div>
          </div>
        </div>
        <div class="docktabs">
          <button class="dtab"><svg class="i"><use href="#textgear"/></svg><span>文本</span></button>
          <button class="dadd" aria-label="添加泊坞窗"><svg class="s12"><use href="#plus"/></svg></button>
        </div>
      </div>
    </aside>

    <div class="palette">
      <i class="grip flat"></i>
      <button aria-label="调色板选项"><svg class="tiny dark"><use href="#tri"/></svg></button>
      <button class="faded" aria-label="滴管"><svg class="s14"><use href="#dropper"/></svg></button>
      <button class="faint" aria-label="上移"><svg class="chev"><use href="#up"/></svg></button>
      <div class="swatches" id="swatches"></div>
      <button class="faint" aria-label="下移"><svg class="chev flip"><use href="#up"/></svg></button>
      <button class="faint" aria-label="展开调色板"><svg class="more"><use href="#more"/></svg></button>
    </div>
  </main>

  <footer class="status">
    <button class="t fly" aria-label="状态栏选项"><svg class="i"><use href="#gear"/></svg></button>
    <span class="hint">单击并拖动可添加段落文本</span>
    <span>文本 于 图层 1</span>
    <div class="fillinfo"><svg class="i"><use href="#bucket"/></svg><i class="chip grey"></i><span class="values">C: 0 M: 0 Y: 0 K: 100</span></div>
    <div class="fillinfo outline"><svg class="i"><use href="#pen"/></svg><i class="nocolor"><svg class="slash"><use href="#slash"/></svg></i><span>无</span></div>
  </footer>
  <div class="taskbar"><i></i></div>

  <div class="ime">CH <svg viewBox="0 0 12 14"><path d="M5 1Q12 5 9 10Q6 13 1 12Q6 9 6 6Q6 3 5 1z" fill="none" stroke="#333"/></svg> 简</div>

  <div class="brand">
    <div class="brandtext"><strong>电脑技术网</strong><a href="#">www.tagxp.com</a></div>
    <div class="tag">TAG</div>
    <div class="mirror"><svg viewBox="0 0 36 36"><path d="M2 30Q-2 14 14 6T34 2Q20 6 12 14T6 26Q12 28 20 22T26 14Q34 26 22 32T2 30z" fill="#1d67dd"/></svg><span><b>极光下载站</b><small>www.xz7.com</small></span></div>
  </div>
</div>
<script src="script.js"></script>
</body>
</html>
```
FILE: styles.css
```css
* { box-sizing: border-box; }
body {
  margin: 0;
  font: 13px/18px "Noto Sans CJK SC", "Noto Sans", sans-serif;
  color: #000;
  background: #f3f3f3;
  overflow: hidden;
}
button, input, select { font: inherit; color: inherit; }
button { border: 0; padding: 0; background: none; display: flex; align-items: center; justify-content: center; }
h1, h2, h3, p { margin: 0; font-size: 13px; font-weight: 400; }
svg { display: block; flex: none; overflow: visible; }
.sprite { position: absolute; width: 0; height: 0; }
.i { width: 16px; height: 16px; }
.s8 { width: 8px; height: 8px; }
.s12 { width: 12px; height: 12px; }
.s14 { width: 14px; height: 14px; }
.s24 { width: 24px; height: 24px; }
.app { height: 100vh; display: flex; flex-direction: column; position: relative; }

/* Title and menu */
.titlebar { height: 21px; background: #fff; display: flex; align-items: center; padding: 0 0 2px 3px; flex: none; }
.logo { width: 16px; height: 18px; margin-right: 5px; }
.titlebar h1 { flex: 1; font-size: 12px; }
.titlebar button { width: 32px; }
.titlebar h1 + button { margin-right: 2px; }
.titlebar button:last-child { width: 24px; }
.menubar { height: 22px; background: #d7d7d7; display: flex; flex: none; font-family: "Open Sans", "Noto Sans CJK SC", sans-serif; }
.menubar button { padding: 0 11px 0 12px; display: block; line-height: 18px; height: 20px; }
.menubar button:first-child { padding-left: 11px; }
.menubar button:nth-child(even) { padding-left: 11px; }

/* Toolbars */
.toolbar { height: 32px; display: flex; align-items: center; padding: 0 2px; border-bottom: 1px solid #d6d6d6; flex: none; }
.props { height: 43px; }
.t { width: 29px; height: 24px; position: relative; flex: none; }
.t.on { width: 24px; margin: 0 3px 0 2px; background: #fff; border: 1px solid #aaa; }
.fly::after { content: ""; position: absolute; right: 1px; bottom: 1px; border: 2px solid; border-color: transparent #777 #777 transparent; }
.fly[disabled]::after, .fly.off::after { border-color: transparent #bbb #bbb transparent; }
.off { color: #b4b4b4; }
.ink { color: #333; }
.sep { width: 8px; height: 25px; flex: none; background: linear-gradient(#d6d6d6, #d6d6d6) 4px 0 / 1px 100% no-repeat; }
.props .sep { height: 38px; }
.drop { width: 15px; height: 24px; margin: 0 2px 0 -2px; flex: none; }
.drop::before, .combo::after, .expand::before, .fold::before { content: ""; border: 4px solid transparent; border-top-color: #777; border-bottom: 0; }
.drop.off { margin: 0 2px 0 0; }
.drop.off::before, .combo.off::after { border-top-color: #c4c4c4; }
.pdf { flex-direction: column; font: 9px/9px Roboto, sans-serif; }
.label { margin: 0 8px 0 9px; font-family: "Open Sans", "Noto Sans CJK SC", sans-serif; }
.start { margin: 0 15px 0 3px; }
.toolbar .zoom { width: 86px; margin: 0 2px 0 3px; }
.toolbar .font { width: 170px; margin: 0 5px 0 8px; }
.toolbar .size { width: 88px; margin-right: 2px; }

.combo { display: grid; grid-template-columns: 1fr 18px; height: 24px; border: 1px solid #aaa; background: linear-gradient(90deg, #fff calc(100% - 19px), #aaa calc(100% - 19px), #aaa calc(100% - 18px), #e9e9e9 calc(100% - 18px)); flex: none; align-items: center; }
.combo.flat { background: #e9e9e9; }
.combo::after { grid-area: 1 / 2; justify-self: center; pointer-events: none; }
.combo select { grid-area: 1 / 1 / 2 / 3; appearance: none; border: 0; background: none; padding: 0 3px 2px; height: 22px; line-height: 18px; width: 100%; }
.combo.off { border-color: #ccc; background: #f3f3f3; }
.combo select:disabled { color: #c4c4c4; opacity: 1; }
.zoom select, .size select { font-size: 12px; }
.combo.editable input { width: 14px; margin-left: 3px; padding: 0; border: 0; height: 15px; line-height: 15px; background: #0078d7; color: #fff; }
.combo.color { width: 52px; padding: 0; }
.combo.color.w53 { width: 53px; }
.second { margin-left: 1px; }
.color .chip, .color .slash { justify-self: center; }
.chip { width: 26px; height: 16px; background: #000; }
.chip.brown { background: #231815; }
.slash { width: 18px; height: 12px; }

.anchor { width: 24px; margin: 0 7px 0 4px; }
.pair { display: flex; flex-direction: column; height: 34px; flex: none; justify-content: center; }
.names { width: 16px; margin-left: 2px; margin-right: 6px; font-size: 12px; line-height: 16px; }
.pct { margin: 0 0 0 2px; width: 10px; }
.ratio { width: 26px; }
.boxes { border: 1px solid #aaa; background: #fff; justify-content: stretch; }
.boxes input { border: 0; padding: 0 3px; height: 16px; width: 100%; font-size: 12px; line-height: 16px; background: none; }
.boxes input:first-child { border-bottom: 1px solid #aaa; height: 17px; }
.w88 { width: 88px; }
.w43 { width: 43px; margin-left: 5px; }
.w50 { width: 50px; }
.props .w88 + .sep { margin-left: 2px; margin-right: 3px; }
.marks { width: 18px; align-items: center; gap: 4px; }
.wide { width: 14px; height: 8px; }
.tall { width: 8px; height: 14px; }
.lock { width: 12px; height: 14px; }
.rot { margin: 0 3px 0 6px; }
.box { height: 24px; border: 1px solid #aaa; padding: 0 3px 2px; font-size: 12px; background: #fff; }
.deg { width: 8px; height: 9px; border: 1px solid #333; border-radius: 50%; margin: 0 8px 6px 10px; }
.aa { flex-direction: column; color: #b4b4b4; font: 14px/14px Roboto, sans-serif; }
.props .aa + .sep { margin: 0 1px 0 2px; }
.bar { width: 14px; height: 4px; }
.bold, .ital { font: 20px/24px Roboto, sans-serif; color: #b4b4b4; }
.ital { font-style: italic; font-family: "Liberation Serif", serif; }
.ital + .t + .sep { margin-left: 3px; }
.gap { margin-left: 6px; }
.gap + .t + .sep { margin-left: 3px; }
.fly + .sep + [disabled]:not(.bold) { margin-left: 3px; }
.oval { font: italic 700 22px/22px "Liberation Serif", serif; color: #333; }
.edit { font: 12px/24px Roboto, sans-serif; }
.beam { width: 4px; height: 16px; }
.props .after { margin-left: 2px; }
.props .last { margin: 0 5px 0 3px; }

/* Work area */
.main { flex: 1; display: flex; min-height: 0; border-bottom: 1px solid #d6d6d6; }
.toolbox { width: 32px; padding: 1px 0 0 1px; border-right: 1px solid #d6d6d6; flex: none; }
.toolbox .t { height: 29px; }
.toolbox .t.on { height: 24px; margin: 3px 0 2px 3px; }
.toolbox .fly::after { right: 2px; bottom: 5px; }
.toolbox .on.fly::after { right: 0; bottom: 0; }
.toolbox .extra { height: 40px; }
.rule { display: block; height: 8px; margin: 0 4px 0 3px; background: linear-gradient(#d6d6d6, #d6d6d6) 0 4px / 100% 1px no-repeat; }
.zi { font-size: 16px; line-height: 20px; font-weight: 700; color: #333; padding-bottom: 2px; }
.work { flex: 1; min-width: 0; display: flex; flex-direction: column; border-right: 1px solid #d0d0d0; }
.tabs { height: 21px; display: flex; background: #e9e9e9; border-bottom: 1px solid #00a2ff; margin-right: 2px; flex: none; }
.tab { background: #d7d7d7; height: 20px; padding-bottom: 2px; }
.home { width: 18px; }
.welcome { padding: 0 28px 2px 16px; }
.current { background: #cde2ff; padding: 0 0 2px 10px; width: 95px; justify-content: flex-start; white-space: nowrap; }
.newtab { width: 21px; }
.desk { flex: 1; min-height: 0; display: grid; grid-template-columns: 17px 1fr 16px; grid-template-rows: 18px 1fr 17px; background: #fff; padding-right: 2px; }
.corner { background: #f3f3f3; padding: 4px 2px; }
.hruler { grid-area: 1 / 2 / 2 / 4; width: 100%; height: 18px; background: #f3f3f3; border-bottom: 1px solid #d6d6d6; overflow: hidden; }
.vruler { grid-area: 2 / 1 / 4 / 2; width: 17px; height: 100%; background: #f3f3f3; border-right: 1px solid #d6d6d6; overflow: hidden; }
.canvas { grid-area: 2 / 2; position: relative; overflow: hidden; background: #fff; }
.sheet { position: absolute; left: 531px; top: 82px; width: 458px; height: 646px; border: 1px solid #aaa; background: #fff; box-shadow: 6px 4px 0 #bfbfbf; }
.artistic { position: absolute; left: 603px; top: 232px; display: flex; gap: 19px; font-size: 36px; line-height: 36px; color: #231815; }
.word { display: flex; gap: 10px; }
.word strong { font-weight: 500; }
.word em { font-weight: 400; }
.caret { position: absolute; left: 929px; top: 253px; width: 1px; height: 17px; background: #000; }
.arrow { position: absolute; left: 670px; top: 284px; width: 40px; height: 76px; filter: drop-shadow(3px 3px 2px #0008); }
.cross { position: absolute; left: 972px; top: 425px; width: 18px; height: 18px; }
.crosszi { position: absolute; left: 985px; top: 435px; font-size: 14px; line-height: 16px; font-weight: 700; }
.vscroll { grid-area: 2 / 3; display: flex; flex-direction: column; background: #fff; min-height: 0; }
.vscroll button { height: 17px; background: #f0f0f0; }
.plain.plain { background: none; }
.vtrack { flex: 1; display: flex; flex-direction: column; padding: 172px 0 171px; }
.thumb { flex: 1; background: #cdcdcd; }
.chev { width: 10px; height: 6px; color: #555; }
.chevs { width: 6px; height: 10px; color: #555; }
.more { width: 9px; height: 8px; }
.flip { transform: rotate(180deg); }
.pagebar { grid-area: 3 / 2 / 4 / 4; display: flex; background: #f3f3f3; min-width: 0; }
.pages { flex: none; width: 50%; border-top: 1px solid #888; border-right: 1px solid #888; display: flex; align-items: center; padding-left: 4px; gap: 7px; }
.addpage { width: 9px; height: 11px; }
.nav { width: 10px; height: 10px; }
.tri { width: 7px; height: 10px; color: #b0b0b0; }
.count { color: #b0b0b0; line-height: 15px; margin-top: -2px; width: 39px; display: flex; justify-content: space-between; }
.pagetab { display: grid; width: 48px; height: 17px; margin: -1px 0 0 4px; }
.pagetab svg { grid-area: 1 / 1; width: 48px; height: 17px; }
.pagetab span { grid-area: 1 / 1; line-height: 14px; z-index: 1; padding-bottom: 2px; }
.pages .grip { margin-left: auto; height: 12px; margin-right: 2px; }
.grip { width: 6px; height: 16px; background: radial-gradient(circle, #aaa 1px, transparent 1px) 0 0 / 3px 3px; }
.hscroll { flex: 1; display: flex; padding-top: 1px; background: #f3f3f3; }
.hscroll button { width: 17px; background: #f0f0f0; }
.docpalette { height: 21px; display: flex; align-items: center; border-top: 1px solid #d6d6d6; padding: 0 16px 0 2px; flex: none; }
.docpalette button { width: 17px; }
.docpalette .eyedrop { width: 23px; }
.docpalette .nocolor { width: 18px; margin-left: -1px; }
.nocolor { width: 18px; height: 18px; border: 1px solid #444; background: #fff; display: flex; align-items: center; justify-content: center; flex: none; }
.nocolor .slash { width: 12px; height: 14px; }
.docpalette p { flex: 1; text-align: center; font-style: italic; color: #aaa; padding: 0 0 2px 22px; }
.tiny { width: 4px; height: 7px; }
.dark { color: #666; }
.faint, .faint .chev, .faint .chevs { color: #c4c4c4; }

/* Docker */
.docker { width: 316px; padding-left: 2px; background: #fff; flex: none; display: flex; flex-direction: column; border-right: 1px solid #d6d6d6; }
.dockhead { height: 23px; background: #e9e9e9; border-bottom: 1px solid #aaa; display: flex; align-items: center; padding: 0 4px 2px 6px; flex: none; }
.dockhead h2 { flex: 1; }
.dockhead button { width: 18px; }
.dbl { width: 10px; height: 8px; }
.dockhead .x { opacity: .4; }
.dockbody { flex: 1; display: flex; min-height: 0; }
.dockmain { flex: 1; min-width: 0; display: flex; flex-direction: column; background: #f3f3f3; border-right: 1px solid #00a2ff; min-height: 0; }
.docktools { height: 28px; background: #e9e9e9; display: flex; align-items: flex-start; padding: 1px 1px 0; gap: 2px; flex: none; }
.sq { width: 24px; height: 24px; position: relative; flex: none; display: flex; align-items: center; justify-content: center; }
.sq.on { background: #fff; border: 1px solid #aaa; }
.push { margin-left: auto; }
.docktools .sep { height: 22px; width: 5px; background-position: 2px 0; }
.dockscroll { flex: 1; display: flex; min-height: 0; }
.scrollarea { flex: 1; min-width: 0; overflow: hidden; }
.dockbar { width: 17px; background: #efefef; border-left: 1px solid #fff; padding: 5px 3px; flex: none; }
.dockbar .chev { color: #bbb; }
.panel { display: flex; flex-direction: column; padding-bottom: 6px; }
.panel.line { border-top: 2px solid #e9e9e9; }
.shead { display: flex; align-items: center; height: 22px; padding: 0 6px 0 7px; gap: 7px; }
.shead h3 { font-weight: 700; font-size: 14px; padding-bottom: 2px; }
.fold { width: 12px; height: 12px; }
.fold::before { transform: rotate(180deg); }
.cog { width: 8px; height: 8px; margin-left: auto; margin-right: 5px; }
.cb { width: 7px; height: 7px; border: 1px solid #ccc; background: #fff; flex: none; }
.row { display: flex; align-items: center; gap: 7px; height: 24px; margin-top: 5px; padding: 0 6px 0 4px; }
.shead + .row { margin-top: 6px; }
.row.space { margin-top: 13px; }
.field { display: flex; align-items: center; gap: 4px; margin-left: -1px; flex: none; }
.field.push { margin-left: auto; }
.w164 { width: 164px; }
.w145 { width: 145px; }
.w114 { width: 114px; }
.w96 { width: 96px; }
.w95 { width: 95px; }
.w65 { width: 65px; }
.w53 { width: 53px; }
.spin { display: flex; height: 24px; border: 1px solid #aaa; background: #fff; flex: none; }
.spin input { flex: 1; min-width: 0; border: 0; padding: 0 0 1px 3px; background: none; font-size: 12px; }
.steps { width: 18px; border-left: 1px solid #aaa; background: #e9e9e9; display: flex; flex-direction: column; align-items: center; justify-content: space-between; padding: 4px 0; }
.steps::before, .steps::after { content: ""; border: 3px solid transparent; }
.steps::before { border-top: 0; border-bottom-color: #777; }
.steps::after { border-bottom: 0; border-top-color: #777; }
.spin.off, .off .steps { border-color: #ccc; background: #f3f3f3; }
.off .steps::before { border-bottom-color: #ccc; }
.off .steps::after { border-top-color: #ccc; }
.spin input:disabled { color: #999; }
.dots { width: 22px; font: 16px/16px "Liberation Sans", sans-serif; color: #333; }
.dots.off { color: #b4b4b4; }
.abfill { width: 16px; height: 14px; background: #ff6d00; color: #fff; font: 700 12px/12px Roboto, sans-serif; display: flex; align-items: center; justify-content: center; }
.expand { height: 18px; background: #e9e9e9; margin-top: 7px; width: 100%; }
.expand.first { margin-top: 15px; }
.aligns { gap: 5px; }
.wide1 { margin-left: 15px; }
hr { width: calc(100% - 4px); border: 0; border-top: 1px solid #d0d0d0; margin: 17px 2px 9px; }
.dir { gap: 5px; padding-left: 1px; }
.dir span { width: 77px; padding-bottom: 2px; }
.docktabs { width: 21px; background: #e9e9e9; flex: none; }
.dtab { width: 21px; height: 74px; background: #cde2ff; flex-direction: column; justify-content: flex-start; gap: 6px; padding-top: 3px; }
.dtab span { writing-mode: vertical-rl; text-orientation: sideways; line-height: 18px; }
.dadd { width: 20px; height: 24px; }

/* Colour palette */
.palette { width: 19px; flex: none; display: flex; flex-direction: column; align-items: center; background: #f0f0f0; padding-top: 2px; }
.palette button { width: 18px; flex: none; height: 19px; }
.grip.flat { width: 16px; height: 5px; }
.faded { opacity: .35; filter: grayscale(1); }
.swatches { display: flex; flex-direction: column; border: 1px solid #555; border-bottom: 0; width: 18px; }
.swatches button { width: 16px; height: 17px; border-bottom: 1px solid #555; }
.swatches .picked { border-bottom-color: #fff; }

/* Status and desktop */
.status { height: 37px; display: flex; align-items: center; padding: 0 0 3px 4px; flex: none; }
.hint { margin: 0 28px 0 3px; }
.fillinfo { display: flex; align-items: center; gap: 4px; margin-left: auto; white-space: nowrap; }
.values { width: 158px; }
.fillinfo.outline { margin: 0 232px 0 0; gap: 2px; }
.chip.grey { width: 21px; height: 21px; background: #231815; }
.taskbar { height: 5px; background: #1f211e; flex: none; display: flex; justify-content: center; }
.taskbar i { width: 160px; margin-right: 274px; background: #55564b; }
.ime { position: absolute; right: 520px; bottom: 29px; height: 26px; width: 61px; border: 1px solid #999; border-radius: 5px; background: #fff; box-shadow: 0 1px 3px #0009; display: flex; align-items: center; justify-content: center; gap: 4px; font-size: 13px; color: #333; }
.ime svg { width: 11px; height: 13px; }
.brand { position: absolute; right: 3px; bottom: 5px; width: 473px; height: 114px; background: #fffc; display: flex; justify-content: space-between; padding: 0 8px 0 12px; }
.brandtext { display: flex; flex-direction: column; white-space: nowrap; }
.brandtext strong { font-size: 50px; line-height: 58px; font-weight: 700; color: #ff2b2b; }
.brandtext a { font: 700 37px/58px "Liberation Serif", serif; color: #1c72f5; text-decoration: none; }
.tag { width: 189px; height: 114px; border-radius: 28px; background: #2a7fff; color: #fff; font: 700 90px/102px "Noto Sans CJK SC", sans-serif; text-align: center; }
.mirror { position: absolute; right: 8px; bottom: 4px; display: flex; gap: 6px; opacity: .3; color: #1658d0; }
.mirror svg { width: 36px; height: 36px; }
.mirror span { display: flex; flex-direction: column; }
.mirror b { font-size: 18px; line-height: 20px; }
.mirror small { font: 16px/18px "Open Sans", sans-serif; }
```
FILE: script.js
```javascript
const NS = "http://www.w3.org/2000/svg";
const STEP = 108.8 / 10;            // pixels for five millimetres at this zoom
const ORIGIN = { x: 532, y: 727 };  // page origin, from the start of each ruler
const POINTER = { x: 980, y: 433 };

function add(svg, name, attrs, text) {
  const node = document.createElementNS(NS, name);
  for (const key in attrs) node.setAttribute(key, attrs[key]);
  if (text !== undefined) node.textContent = text;
  svg.append(node);
}

function drawRuler(svg, vertical) {
  svg.replaceChildren();
  const length = vertical ? svg.clientHeight : svg.clientWidth;
  const origin = vertical ? ORIGIN.y : ORIGIN.x;
  for (let n = -80; n <= 100; n++) {
    const pos = Math.round(origin + n * STEP);
    if (pos < 8 || pos > length) continue;
    const size = n % 10 === 0 ? 5 : n % 5 === 0 ? 2 : 1;
    add(svg, "rect", vertical
      ? { x: 16 - size, y: pos, width: size, height: 1, fill: "#888" }
      : { x: pos, y: 16 - size, width: 1, height: size, fill: "#888" });
    if (n % 10 === 0) {
      const attrs = { "text-anchor": "middle", "font-size": 9, fill: "#8a8a8a" };
      if (vertical) attrs.transform = `translate(11 ${pos}) rotate(-90)`;
      else { attrs.x = pos; attrs.y = 10; }
      if (vertical || pos < length - 60) add(svg, "text", attrs, Math.abs(n * 5));
    }
  }
  if (!vertical) add(svg, "text", { x: length - 23, y: 10, "font-size": 10, fill: "#666" }, "毫米");
  add(svg, "line", vertical
    ? { x1: 1, x2: 16, y1: POINTER.y + .5, y2: POINTER.y + .5, stroke: "#000", "stroke-dasharray": "3 2" }
    : { y1: 1, y2: 16, x1: POINTER.x + .5, x2: POINTER.x + .5, stroke: "#000", "stroke-dasharray": "3 2" });
}

function drawRulers() {
  drawRuler(document.getElementById("hruler"), false);
  drawRuler(document.getElementById("vruler"), true);
}
drawRulers();
addEventListener("resize", drawRulers);

const colours = ["#474747", "#231815", "#3e3838", "#595657", "#707070", "#898989", "#9fa0a0", "#b5b5b6",
  "#c9caca", "#dcdddd", "#efefef", "#ffffff", "#1d2088", "#00a0e9", "#009944", "#fff100", "#e60012",
  "#e4007f", "#b04084", "#f08300", "#f5b2b2", "#87756a", "#d0cbe4", "#a59aca", "#6c8bc7", "#7b67ae",
  "#9283ae", "#4c638f", "#57506e", "#71869f", "#008cd6", "#a0d8f6", "#b7ccda", "#96a8b0", "#71808a",
  "#485058", "#527471", "#438b7b", "#73999a", "#56a998", "#5aa56f", "#5ec0cf", "#4ea8b4", "#b9ccbc",
  "#b4d4b4", "#7fca8c"];
const swatches = document.getElementById("swatches");
colours.forEach((colour, index) => {
  const button = document.createElement("button");
  button.style.backgroundColor = colour;
  button.setAttribute("aria-label", colour);
  if (index === 0) {
    button.innerHTML = '<svg width="10" height="10" viewBox="0 0 10 10"><path d="M0 10L10 0" stroke="#d01818"/></svg>';
  }
  if (index === 12 || index === 13) button.className = "picked";
  swatches.append(button);
});
```
